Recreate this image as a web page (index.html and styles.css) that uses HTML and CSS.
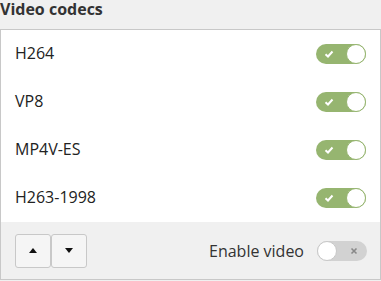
FILE: index.html
```html
<!DOCTYPE html>
<html>
  <head>
    <meta charset='utf-8' />
    <title>Video codecs</title>
    <link rel="stylesheet" href="styles.css">
  </head>
  <body>
    <h2 class='title'>Video codecs</h2>
    <div class='panel'>
      <div class='codecs'>
        <div class='codec'>
          <span class='name'>H264</span>
          <span class='switch on'>
            <svg class='mark' width='10' height='8' viewBox='0 0 10 8'><polyline points='1.5,4.2 4,6.5 8.5,1.5' fill='none' stroke='#fff' stroke-width='2' /></svg>
            <span class='knob'></span>
          </span>
        </div>
        <div class='codec'>
          <span class='name'>VP8</span>
          <span class='switch on'>
            <svg class='mark' width='10' height='8' viewBox='0 0 10 8'><polyline points='1.5,4.2 4,6.5 8.5,1.5' fill='none' stroke='#fff' stroke-width='2' /></svg>
            <span class='knob'></span>
          </span>
        </div>
        <div class='codec'>
          <span class='name'>MP4V-ES</span>
          <span class='switch on'>
            <svg class='mark' width='10' height='8' viewBox='0 0 10 8'><polyline points='1.5,4.2 4,6.5 8.5,1.5' fill='none' stroke='#fff' stroke-width='2' /></svg>
            <span class='knob'></span>
          </span>
        </div>
        <div class='codec'>
          <span class='name'>H263-1998</span>
          <span class='switch on'>
            <svg class='mark' width='10' height='8' viewBox='0 0 10 8'><polyline points='1.5,4.2 4,6.5 8.5,1.5' fill='none' stroke='#fff' stroke-width='2' /></svg>
            <span class='knob'></span>
          </span>
        </div>
      </div>
      <div class='footer'>
        <div class='arrows'>
          <button class='btn'><span class='up'></span></button>
          <button class='btn'><span class='down'></span></button>
        </div>
        <span class='label'>Enable video</span>
        <span class='switch off'>
          <span class='knob'></span>
          <svg class='mark' width='8' height='8' viewBox='0 0 8 8'><path d='M1.5,1.5 L6.5,6.5 M6.5,1.5 L1.5,6.5' stroke='#888' stroke-width='1.6' /></svg>
        </span>
      </div>
    </div>
  </body>
</html>
```

FILE: styles.css
```css
* {
  box-sizing: border-box;
}
html, body {
  margin: 0;
  padding: 0;
}
body {
  background: #f0f0f0;
  font-family: "Open Sans", "Noto Sans", sans-serif;
  font-size: 16px;
  color: #222;
  width: 381px;
}
.title {
  margin: 0;
  height: 29px;
  padding-top: 1px;
  font-size: 16px;
  line-height: 16px;
  font-weight: bold;
  color: #333;
}
.panel {
  border: 1px solid #c8c8c8;
  background: #fff;
}
.codec {
  height: 48px;
  display: flex;
  align-items: center;
  justify-content: space-between;
  padding: 0 14px 0 14px;
}
.name {
  line-height: 20px;
  margin-top: -3px;
}
.switch {
  width: 50px;
  height: 20px;
  border-radius: 10px;
  display: flex;
  align-items: center;
  justify-content: space-between;
}
.switch.on {
  background: #96b570;
  padding-left: 8px;
}
.switch.off {
  background: #d2d2d2;
  padding-right: 9px;
}
.knob {
  width: 20px;
  height: 20px;
  border-radius: 50%;
  background: #fff;
}
.on .knob {
  border: 1px solid #96b570;
}
.off .knob {
  border: 1px solid #c8c8c8;
}
.mark {
  display: block;
}
.footer {
  background: #f0f0f0;
  height: 57px;
  display: flex;
  align-items: center;
  padding: 0 13px 0 14px;
}
.arrows {
  display: flex;
  margin-right: auto;
}
.btn {
  width: 36px;
  height: 34px;
  border: 1px solid #c8c8c8;
  border-radius: 3px;
  background: #f5f5f5;
  padding: 0;
  display: flex;
  align-items: center;
  justify-content: center;
}
.up {
  border-left: 4px solid transparent;
  border-right: 4px solid transparent;
  border-bottom: 5px solid #111;
}
.down {
  border-left: 4px solid transparent;
  border-right: 4px solid transparent;
  border-top: 5px solid #111;
}
.label {
  color: #333;
  margin-right: 13px;
  line-height: 20px;
}
```
